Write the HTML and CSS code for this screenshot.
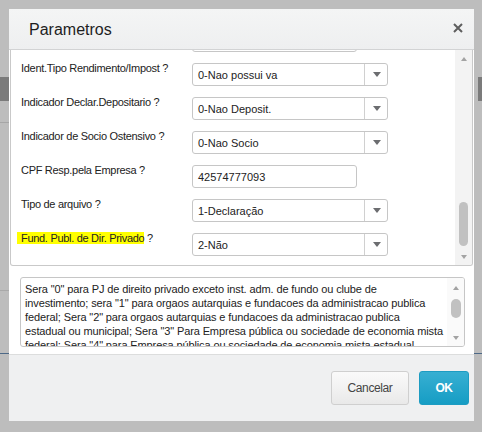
FILE: index.html
```html
<!DOCTYPE html>
<html lang="pt">
<head>
    <meta charset="UTF-8">
    <title>Parametros</title>
    <link rel="stylesheet" href="styles.css">
</head>
<body>
<div class="modal">
    <div class="modal-header">
        <span class="title">Parametros</span>
        <span class="close">
            <svg width="10" height="10" viewBox="0 0 10 10"><path d="M1 1L9 9M9 1L1 9" stroke="#5e5e5e" stroke-width="2"/></svg>
        </span>
    </div>
    <div class="modal-body">
        <div class="panel">
            <div class="panel-inner">
                <ul class="form">
                    <li>
                        <span class="label"></span>
                        <span class="input"></span>
                    </li>
                    <li>
                        <span class="label">Ident.Tipo Rendimento/Impost ?</span>
                        <span class="select"><span class="value">0-Nao possui va</span><span class="caret"></span></span>
                    </li>
                    <li>
                        <span class="label">Indicador Declar.Depositario ?</span>
                        <span class="select"><span class="value">0-Nao Deposit.</span><span class="caret"></span></span>
                    </li>
                    <li>
                        <span class="label">Indicador de Socio Ostensivo ?</span>
                        <span class="select"><span class="value">0-Nao Socio</span><span class="caret"></span></span>
                    </li>
                    <li>
                        <span class="label">CPF Resp.pela Empresa ?</span>
                        <span class="input">42574777093</span>
                    </li>
                    <li>
                        <span class="label">Tipo de arquivo ?</span>
                        <span class="select"><span class="value">1-Declaração</span><span class="caret"></span></span>
                    </li>
                    <li>
                        <span class="label"><mark>Fund. Publ. de Dir. Privado</mark> ?</span>
                        <span class="select"><span class="value">2-Não</span><span class="caret"></span></span>
                    </li>
                </ul>
            </div>
            <div class="scrollbar">
                <span class="arrow up"></span>
                <span class="track"><span class="thumb"></span></span>
                <span class="arrow down"></span>
            </div>
        </div>
        <div class="help">
            <div class="help-text">
                Sera "0" para PJ de direito privado exceto inst. adm. de fundo ou clube de<br>
                investimento; sera "1" para orgaos autarquias e fundacoes da administracao publica<br>
                federal; Sera "2" para orgaos autarquias e fundacoes da administracao publica<br>
                estadual ou municipal; Sera "3" Para Empresa pública ou sociedade de economia mista<br>
                federal; Sera "4" para Empresa pública ou sociedade de economia mista estadual
            </div>
            <div class="scrollbar small">
                <span class="arrow up"></span>
                <span class="track"><span class="thumb"></span></span>
                <span class="arrow down"></span>
            </div>
        </div>
    </div>
    <div class="modal-footer">
        <button class="btn">Cancelar</button>
        <button class="btn primary">OK</button>
    </div>
</div>
</body>
</html>
```

FILE: styles.css
```css
html, body{
    margin: 0;
    padding: 0;
}
body{
    width: 482px;
    height: 432px;
    overflow: hidden;
    font-family: "Liberation Sans", Arial, sans-serif;
    color: #222;
    background-color: #bdbdbd;
    background-image:
        linear-gradient(#7b7b7b, #7b7b7b),
        linear-gradient(#7b7b7b, #7b7b7b),
        linear-gradient(#a6a6a6, #a6a6a6),
        linear-gradient(#a9a9a9, #a9a9a9),
        linear-gradient(#4d6987, #4d6987),
        linear-gradient(#4d6987, #4d6987);
    background-size: 9px 24px, 4px 24px, 9px 1px, 9px 1px, 10px 1px, 8px 1px;
    background-position: 0 77px, 478px 77px, 0 122px, 0 290px, 0 353px, 474px 353px;
    background-repeat: no-repeat;
}
.modal{
    width: 465px;
    height: 412px;
    margin: 9px 0 0 9px;
    background: #fff;
    display: flex;
    flex-direction: column;
}
.modal-header{
    height: 40px;
    border-bottom: 1px solid #d2d3d4;
    background: linear-gradient(#f4f5f5, #eeeff0);
    display: flex;
    align-items: center;
    justify-content: space-between;
    padding: 0 11px 0 20px;
}
.title{
    font-size: 16px;
    line-height: 20px;
    color: #1e1e1e;
    margin-top: 2px;
}
.close{
    display: flex;
    margin-top: -2px;
}
.modal-body{
    flex: 1;
    padding: 0 1px;
}
.panel{
    height: 216px;
    box-sizing: border-box;
    border: 1px solid #c9c9c9;
    border-top: none;
    border-radius: 0 0 3px 3px;
    display: flex;
    overflow: hidden;
}
.panel-inner{
    flex: 1;
    overflow: hidden;
}
.form{
    margin: -21px 0 0;
    padding: 0 0 0 10px;
    list-style: none;
    display: flex;
    flex-direction: column;
    gap: 11px;
}
.form li{
    display: flex;
    align-items: flex-start;
    height: 23px;
}
.label{
    width: 171px;
    font-size: 11px;
    line-height: 13px;
    letter-spacing: -0.3px;
    margin-top: -1px;
    white-space: nowrap;
}
mark{
    background: #ffff00;
    color: #222;
    padding-left: 4px;
    margin-left: -4px;
}
.input, .select{
    box-sizing: border-box;
    height: 23px;
    border: 1px solid #c6c6c6;
    border-radius: 3px;
    font-size: 11px;
    display: flex;
    align-items: center;
    background: #fff;
}
.input{
    width: 165px;
    padding-left: 5px;
}
.select{
    width: 196px;
}
.select .value{
    flex: 1;
    padding-left: 5px;
    border-right: 1px solid #d0d0d0;
    height: 100%;
    display: flex;
    align-items: center;
}
.caret{
    width: 22px;
    display: flex;
    justify-content: center;
}
.caret::before{
    content: "";
    border-left: 4px solid transparent;
    border-right: 4px solid transparent;
    border-top: 5px solid #6c6d70;
    margin-left: 2px;
}
.scrollbar{
    width: 17px;
    background: #f3f3f3;
    display: flex;
    flex-direction: column;
}
.arrow{
    height: 17px;
    display: flex;
    align-items: center;
    justify-content: center;
}
.arrow::before{
    content: "";
    border-left: 3px solid transparent;
    border-right: 3px solid transparent;
}
.arrow.up::before{
    border-bottom: 4px solid #a3a3a3;
}
.arrow.down::before{
    border-top: 4px solid #a3a3a3;
}
.track{
    flex: 1;
    display: flex;
    flex-direction: column;
    justify-content: flex-end;
    align-items: center;
    padding-bottom: 2px;
}
.thumb{
    width: 9px;
    height: 44px;
    border-radius: 5px;
    background: #c1c1c1;
}
.help{
    width: 445px;
    height: 70px;
    box-sizing: border-box;
    margin: 11px 0 0 10px;
    border: 1px solid #c6c6c6;
    border-radius: 3px;
    display: flex;
    overflow: hidden;
}
.help-text{
    flex: 1;
    padding: 4px 0 0 4px;
    font-size: 11px;
    line-height: 14px;
    letter-spacing: -0.12px;
    white-space: nowrap;
    overflow: hidden;
}
.scrollbar.small{
    background: #fafafa;
    padding-top: 1px;
}
.scrollbar.small .track{
    justify-content: flex-start;
    padding: 3px 0 0;
}
.scrollbar.small .thumb{
    width: 10px;
    height: 19px;
}
.modal-footer{
    height: 67px;
    box-sizing: border-box;
    border-top: 1px solid #dcdddd;
    background: #eff0f1;
    display: flex;
    justify-content: flex-end;
    align-items: flex-start;
    gap: 10px;
    padding: 16px 5px 0 0;
}
.btn{
    height: 34px;
    box-sizing: border-box;
    border: 1px solid #cfcfcf;
    border-radius: 3px;
    background: linear-gradient(#fafafa, #e9e9e9);
    font-family: "Liberation Sans", Arial, sans-serif;
    font-size: 12px;
    letter-spacing: -0.4px;
    color: #444;
    width: 78px;
    padding: 0;
}
.btn.primary{
    width: 50px;
    border-color: #1d9cc2;
    background: linear-gradient(#37afd2, #169dc4);
    color: #fff;
    font-weight: bold;
}
```
